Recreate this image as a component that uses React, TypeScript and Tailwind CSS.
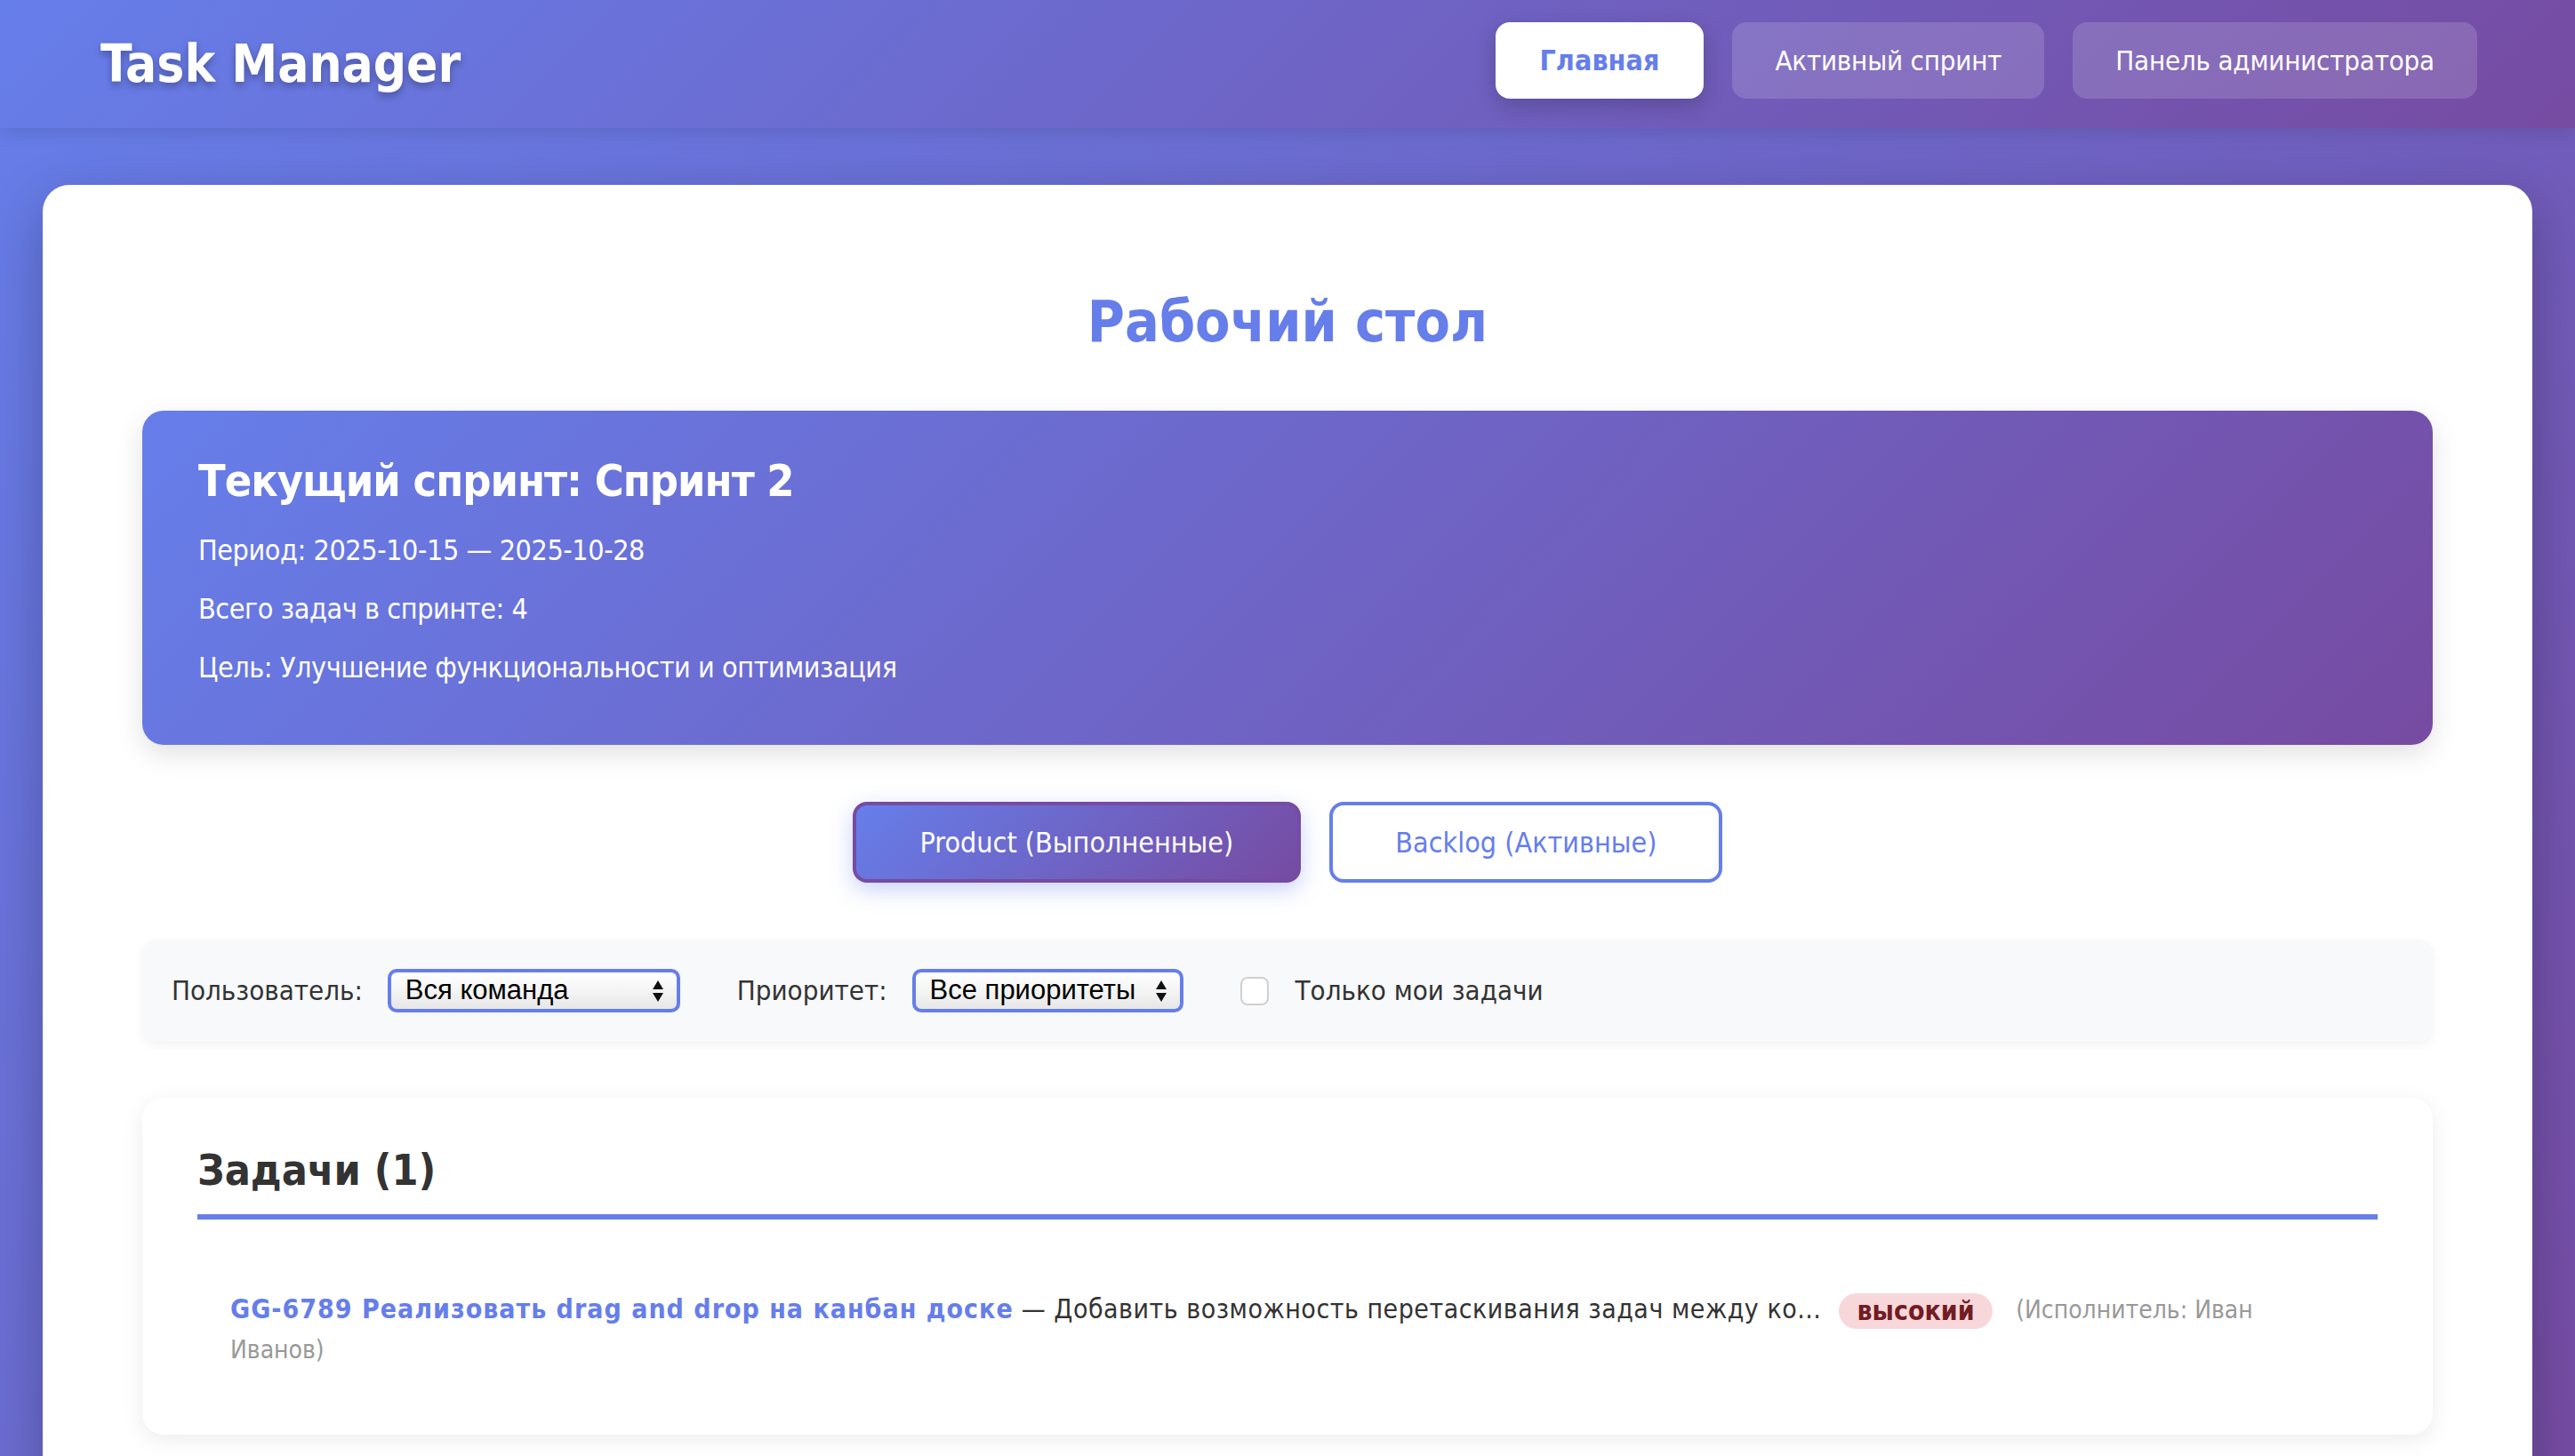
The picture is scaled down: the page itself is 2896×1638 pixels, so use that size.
import React from 'react';

const font = "font-['DejaVu_Sans_Condensed','Liberation_Sans',sans-serif]";

const NavButton = ({ label, active }: { label: string; active?: boolean }) => (
  <button
    className={
      active
        ? 'h-[86px] px-[50px] rounded-[16px] bg-white text-[#667eea] font-bold text-[32px] shadow-[0_8px_24px_rgba(0,0,0,0.2)]'
        : 'h-[86px] px-[48px] rounded-[16px] bg-white/15 text-white text-[31px] tracking-[-0.2px]'
    }
  >
    {label}
  </button>
);

const FakeSelect = ({ value, width }: { value: string; width: string }) => (
  <div
    className={`${width} h-[49px] flex items-center justify-between pl-[16px] pr-[14px] rounded-[10px] border-[4px] border-[#667eea] bg-[linear-gradient(180deg,#ffffff_0%,#f3f3f3_55%,#e6e6e6_100%)] text-black text-[31px] font-['Liberation_Sans',sans-serif]`}
  >
    <span>{value}</span>
    <svg width="14" height="28" viewBox="0 0 14 28">
      <path d="M7 2 L13 12 L1 12 Z" fill="#111" />
      <path d="M1 16 L13 16 L7 26 Z" fill="#111" />
    </svg>
  </div>
);

export default function App() {
  return (
    <div className={`${font} min-h-screen bg-[linear-gradient(135deg,#667eea_0%,#764ba2_100%)] text-[#333]`}>
      {/* Header */}
      <header className="h-[144px] flex items-center justify-between pl-[113px] pr-[110px] bg-[linear-gradient(135deg,#667eea_0%,#764ba2_100%)] shadow-[0_4px_20px_rgba(0,0,0,0.12)] relative">
        <h1 className="text-white font-bold text-[58px] [text-shadow:0_4px_8px_rgba(0,0,0,0.3)]">Task Manager</h1>
        <nav className="flex gap-[32px] mb-[8px]">
          <NavButton label="Главная" active />
          <NavButton label="Активный спринт" />
          <NavButton label="Панель администратора" />
        </nav>
      </header>

      {/* Main card */}
      <main className="mx-[48px] mt-[64px] bg-white rounded-[30px] shadow-[0_20px_60px_rgba(0,0,0,0.25)] px-[112px] pt-[116px] pb-[120px]">
        <h2 className="text-center text-[64px] leading-[76px] font-bold text-[#667eea]">Рабочий стол</h2>

        {/* Sprint info */}
        <section className="mt-[62px] rounded-[24px] bg-[linear-gradient(135deg,#667eea_0%,#764ba2_100%)] text-white pl-[63px] pt-[48px] pb-[62px] shadow-[0_10px_30px_rgba(0,0,0,0.12)]">
          <h3 className="text-[50px] leading-[62px] font-bold tracking-[-1px]">Текущий спринт: Спринт 2</h3>
          <div className="mt-[22px] flex flex-col gap-[16px] text-[32px] leading-[50px] tracking-[-0.4px]">
            <p>Период: 2025-10-15 — 2025-10-28</p>
            <p>Всего задач в спринте: 4</p>
            <p>Цель: Улучшение функциональности и оптимизация</p>
          </div>
        </section>

        {/* Tabs */}
        <div className="mt-[64px] flex justify-center gap-[32px]">
          <button className="h-[91px] px-[72px] rounded-[16px] border-[4px] border-[#764ba2] bg-[linear-gradient(135deg,#667eea_0%,#764ba2_100%)] text-white text-[32px] shadow-[0_8px_24px_rgba(102,126,234,0.35)]">
            Product (Выполненные)
          </button>
          <button className="h-[91px] px-[70px] rounded-[16px] border-[4px] border-[#667eea] bg-white text-[#667eea] text-[32px]">
            Backlog (Активные)
          </button>
        </div>

        {/* Filters */}
        <div className="mt-[64px] h-[115px] rounded-[16px] bg-[#f8f9fa] shadow-[0_4px_12px_rgba(0,0,0,0.05)] flex items-center pl-[33px] gap-[64px] text-[31px] text-[#333]">
          <div className="flex items-center gap-[28px]">
            <span>Пользователь:</span>
            <FakeSelect value="Вся команда" width="w-[329px]" />
          </div>
          <div className="flex items-center gap-[28px]">
            <span>Приоритет:</span>
            <FakeSelect value="Все приоритеты" width="w-[305px]" />
          </div>
          <label className="flex items-center gap-[30px]">
            <span className="w-[32px] h-[32px] rounded-[8px] border-[2px] border-[#d0d0d0] bg-white" />
            <span>Только мои задачи</span>
          </label>
        </div>

        {/* Tasks */}
        <section className="mt-[63px] rounded-[24px] bg-white shadow-[0_6px_24px_rgba(0,0,0,0.08)] px-[62px] pt-[52px] pb-[73px]">
          <h3 className="text-[48px] leading-[58px] font-bold text-[#333] pb-[21px] border-b-[6px] border-[#667eea]">
            Задачи (1)
          </h3>
          <div className="pt-[79px] pl-[37px] pr-[60px] text-[30px] leading-[44px] text-[#333]">
            <a className="font-bold text-[#667eea] tracking-[1px]">GG-6789 Реализовать drag and drop на канбан доске</a>
            <span className="tracking-[0.5px]"> — Добавить возможность перетаскивания задач между ко...</span>
            <span className="inline-block align-middle ml-[20px] mr-[18px] px-[20px] py-[4px] leading-[32px] rounded-full bg-[#f8d7da] text-[#721c24] text-[30px] font-bold">высокий</span>
            {' '}
            <span className="text-[28px] text-[#999]">(Исполнитель: Иван </span>
            <span className="text-[28px] text-[#999]">Иванов)</span>
          </div>
        </section>
      </main>
    </div>
  );
}
